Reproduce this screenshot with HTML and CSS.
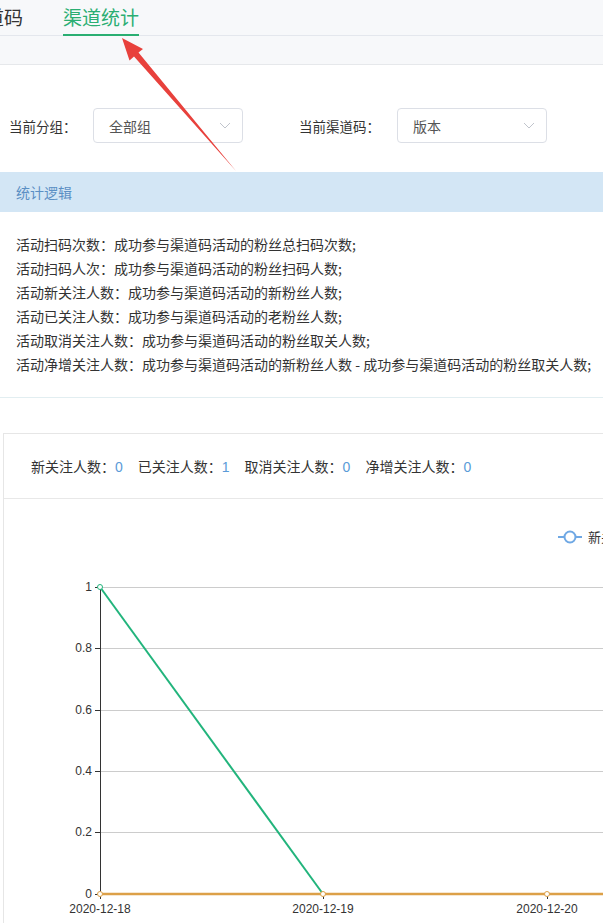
FILE: index.html
```html
<!DOCTYPE html>
<html lang="zh-CN">
<head>
    <meta charset="UTF-8">
    <meta name="viewport" content="width=device-width, initial-scale=1.0">
    <title>渠道统计</title>
    <link rel="stylesheet" href="styles.css">
</head>
<body>

<div class="tabs">
    <div class="tab first">渠道码</div>
    <div class="tab active">渠道统计</div>
</div>
<div class="subbar"></div>

<div class="filters">
    <div class="field">
        <span class="field-label">当前分组：</span>
        <div class="select">
            <span>全部组</span>
            <svg class="chevron" width="12" height="7" viewBox="0 0 12 7"><path d="M1 1 L6 6 L11 1" fill="none" stroke="#c0c4cc" stroke-width="1"/></svg>
        </div>
    </div>
    <div class="field">
        <span class="field-label wide">当前渠道码：</span>
        <div class="select">
            <span>版本</span>
            <svg class="chevron" width="12" height="7" viewBox="0 0 12 7"><path d="M1 1 L6 6 L11 1" fill="none" stroke="#c0c4cc" stroke-width="1"/></svg>
        </div>
    </div>
</div>

<div class="logic">
    <div class="logic-head">统计逻辑</div>
    <div class="logic-body">
        <p>活动扫码次数：成功参与渠道码活动的粉丝总扫码次数;</p>
        <p>活动扫码人次：成功参与渠道码活动的粉丝扫码人数;</p>
        <p>活动新关注人数：成功参与渠道码活动的新粉丝人数;</p>
        <p>活动已关注人数：成功参与渠道码活动的老粉丝人数;</p>
        <p>活动取消关注人数：成功参与渠道码活动的粉丝取关人数;</p>
        <p>活动净增关注人数：成功参与渠道码活动的新粉丝人数 - 成功参与渠道码活动的粉丝取关人数;</p>
    </div>
</div>

<div class="card">
    <div class="totals">
        <span class="total">新关注人数：<b>0</b></span>
        <span class="total">已关注人数：<b>1</b></span>
        <span class="total">取消关注人数：<b>0</b></span>
        <span class="total">净增关注人数：<b>0</b></span>
    </div>
    <!-- viewBox em coordenadas da página para facilitar -->
    <svg class="chart" width="599" height="424" viewBox="4 499 599 424">
        <g class="legend">
            <line x1="558" y1="537" x2="582" y2="537" stroke="#6fa8e4" stroke-width="2"/>
            <circle cx="570" cy="537" r="5.5" fill="#fff" stroke="#6fa8e4" stroke-width="2"/>
            <text x="588" y="542" class="legend-text">新关注人数</text>
        </g>
        <g class="grid" stroke="#cccccc" stroke-width="1">
            <line x1="100" y1="587.5" x2="603" y2="587.5"/>
            <line x1="100" y1="648.5" x2="603" y2="648.5"/>
            <line x1="100" y1="710.5" x2="603" y2="710.5"/>
            <line x1="100" y1="771.5" x2="603" y2="771.5"/>
            <line x1="100" y1="832.5" x2="603" y2="832.5"/>
        </g>
        <g class="axis" stroke="#333" stroke-width="1">
            <line x1="100.5" y1="587" x2="100.5" y2="899"/>
            <line x1="95" y1="587.5" x2="100" y2="587.5"/>
            <line x1="95" y1="648.5" x2="100" y2="648.5"/>
            <line x1="95" y1="710.5" x2="100" y2="710.5"/>
            <line x1="95" y1="771.5" x2="100" y2="771.5"/>
            <line x1="95" y1="832.5" x2="100" y2="832.5"/>
            <line x1="95" y1="894.5" x2="100" y2="894.5"/>
            <line x1="323.5" y1="894" x2="323.5" y2="899"/>
            <line x1="547.5" y1="894" x2="547.5" y2="899"/>
        </g>
        <g class="ylabels">
            <text x="92" y="591">1</text>
            <text x="92" y="652">0.8</text>
            <text x="92" y="714">0.6</text>
            <text x="92" y="775">0.4</text>
            <text x="92" y="836">0.2</text>
            <text x="92" y="898">0</text>
        </g>
        <g class="xlabels">
            <text x="100" y="913">2020-12-18</text>
            <text x="323" y="913">2020-12-19</text>
            <text x="547" y="913">2020-12-20</text>
        </g>
        <polyline points="100,894 323,894 547,894 603,894" fill="none" stroke="#dca048" stroke-width="2.5"/>
        <polyline points="100,587 323,894" fill="none" stroke="#22b47c" stroke-width="2"/>
        <circle cx="100" cy="587" r="2.5" fill="#fff" stroke="#22b47c" stroke-width="1"/>
        <circle cx="100" cy="894" r="2.5" fill="#fff" stroke="#dca048" stroke-width="1"/>
        <circle cx="323" cy="894" r="2.5" fill="#fff" stroke="#dca048" stroke-width="1"/>
        <circle cx="547" cy="894" r="2.5" fill="#fff" stroke="#dca048" stroke-width="1"/>
    </svg>
</div>

<!-- seta de anotação sobre a tela -->
<svg class="arrow" width="603" height="200" viewBox="0 0 603 200">
    <polygon points="122,38 143,49 138.5,52.5 236,171 134,56.5 129.5,60.5" fill="#e8413c"/>
</svg>

</body>
</html>
```

FILE: styles.css
```css
body {
    margin: 0;
    width: 603px;
    height: 923px;
    overflow: hidden;
    position: relative;
    background: #fff;
    font-family: "Noto Sans CJK SC", "Liberation Sans", sans-serif;
    color: #333;
}
p {
    margin: 0;
}
.tabs {
    height: 35px;
    display: flex;
    gap: 40px;
    background: #f7f8fa;
    border-bottom: 1px solid #e4e7ed;
}
.tab {
    font-size: 19px;
    line-height: 33px;
    color: #333;
    border-bottom: 2px solid transparent;
    margin-bottom: -1px;
    white-space: nowrap;
}
.tab.first {
    margin-left: -34px;
}
.tab.active {
    color: #2aae72;
    border-bottom-color: #2aae72;
}
.subbar {
    height: 28px;
    background: #f7f8fa;
    border-bottom: 1px solid #e6e8eb;
}
.filters {
    display: flex;
    gap: 56px;
    padding: 43px 0 29px 9px;
}
.field {
    display: flex;
    align-items: center;
}
.field-label {
    font-size: 13.5px;
    width: 84px;
}
.field-label.wide {
    width: 98px;
}
.select {
    height: 33px;
    border: 1px solid #dcdfe6;
    border-radius: 4px;
    display: flex;
    align-items: center;
    justify-content: space-between;
    padding: 0 11px 0 15px;
    box-sizing: content-box;
    width: 122px;
    font-size: 14px;
    color: #555;
}
.logic {
    border-bottom: 1px solid #e2eef1;
}
.logic-head {
    height: 40px;
    line-height: 40px;
    padding-left: 16px;
    background: #d3e6f5;
    color: #5b8fc4;
    font-size: 14px;
}
.logic-body {
    padding: 20px 0 21px 16px;
    font-size: 14px;
    line-height: 24px;
    white-space: nowrap;
}
.card {
    margin: 35px 0 0 3px;
    border-left: 1px solid #e6e6e6;
    border-top: 1px solid #e6e6e6;
}
.totals {
    height: 64px;
    display: flex;
    align-items: center;
    gap: 15px;
    padding-left: 27px;
    font-size: 14px;
    border-bottom: 1px solid #e8e8e8;
}
.total b {
    font-weight: normal;
    color: #5b9bd8;
    font-family: "Liberation Sans", sans-serif;
}
.chart {
    display: block;
}
.chart text {
    font-family: "Liberation Sans", "Noto Sans CJK SC", sans-serif;
    font-size: 12px;
    fill: #333;
}
.ylabels text {
    text-anchor: end;
}
.xlabels text {
    text-anchor: middle;
}
.chart .legend-text {
    font-family: "Noto Sans CJK SC", sans-serif;
    font-size: 13px;
}
.arrow {
    position: absolute;
    left: 0;
    top: 0;
}
```
